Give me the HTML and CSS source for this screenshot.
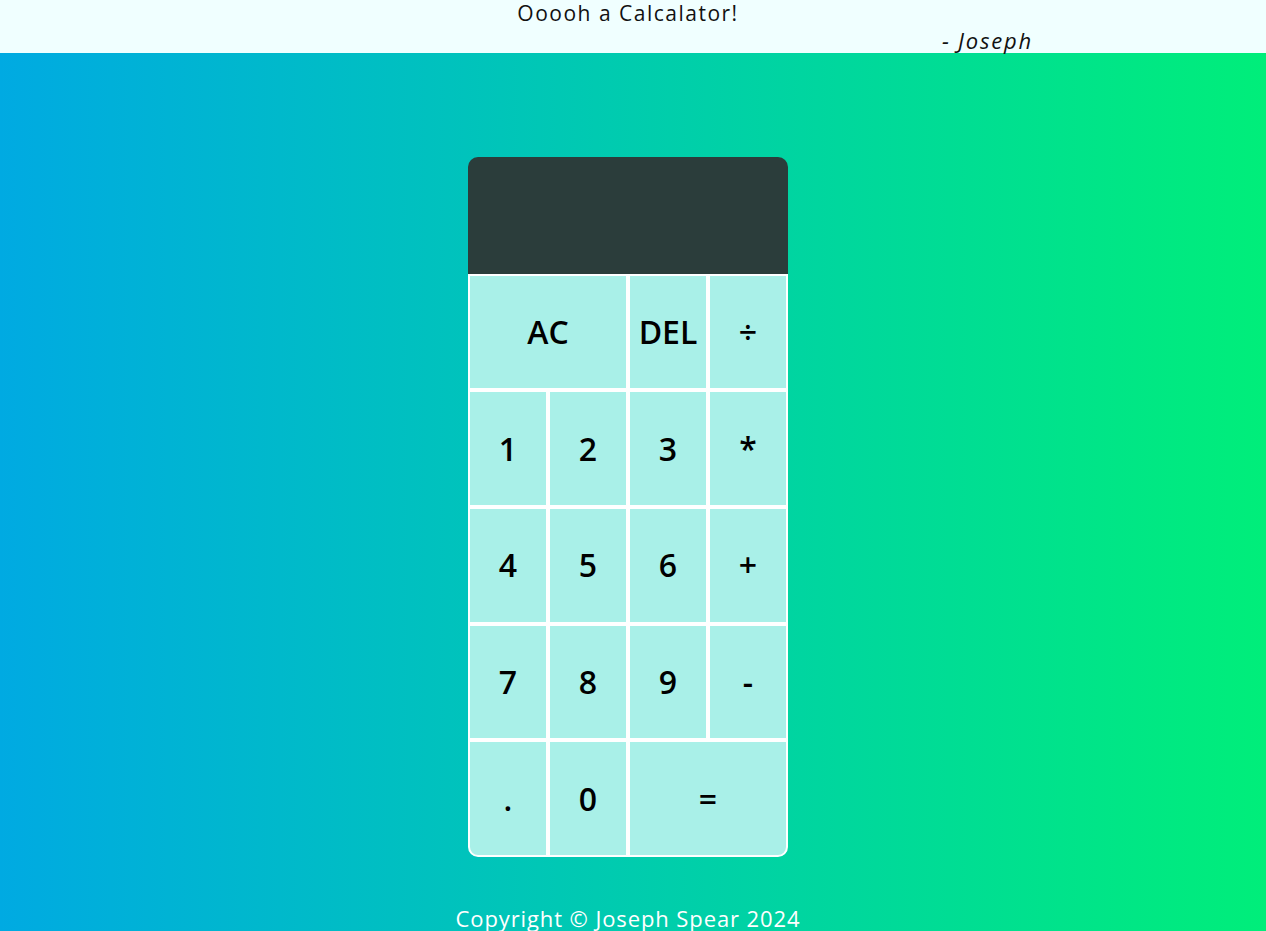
FILE: index.html
```html
<!DOCTYPE html>
<html lang="en">
<head>
<meta charset="utf-8">
<title>Calculator</title>
<link rel="stylesheet" href="styles.css">
</head>
<body>
<header class="top">
  <div class="quote">
    <p class="quote-text">Ooooh a Calcalator!</p>
    <p class="quote-author">- Joseph</p>
  </div>
</header>
<main class="page">
  <div class="calc">
    <div class="output"></div>
    <button class="key span-two">AC</button>
    <button class="key">DEL</button>
    <button class="key">÷</button>
    <button class="key">1</button>
    <button class="key">2</button>
    <button class="key">3</button>
    <button class="key">*</button>
    <button class="key">4</button>
    <button class="key">5</button>
    <button class="key">6</button>
    <button class="key">+</button>
    <button class="key">7</button>
    <button class="key">8</button>
    <button class="key">9</button>
    <button class="key">-</button>
    <button class="key corner-left">.</button>
    <button class="key">0</button>
    <button class="key span-two corner-right">=</button>
  </div>
  <footer class="foot">Copyright © Joseph Spear 2024</footer>
</main>
</body>
</html>
```
FILE: styles.css
```css
* { box-sizing: border-box; }
html, body {
  margin: 0;
  padding: 0;
}
body {
  font-family: "Open Sans", "DejaVu Sans", sans-serif;
  background: linear-gradient(to right, #00aae2, #00ee7a);
  min-height: 960px;
}
.top {
  background: #f0ffff;
  height: 53px;
  padding-right: 10px;
}
.quote {
  width: 810px;
  margin: 0 auto;
  font-size: 21px;
  color: #111;
}
.quote-text {
  margin: 0;
  text-align: center;
  line-height: 27px;
  letter-spacing: 1.5px;
}
.quote-author {
  margin: 0;
  text-align: right;
  font-style: italic;
  font-size: 22px;
  line-height: 26px;
  letter-spacing: 1.8px;
}
.page {
  display: flex;
  flex-direction: column;
  align-items: center;
  padding-top: 104px;
  padding-right: 10px;
}
.calc {
  display: grid;
  grid-template-columns: repeat(4, 80px);
  grid-template-rows: repeat(6, 1fr);
  height: 700px;
  border-radius: 10px;
}
.output {
  grid-column: 1 / -1;
  background: #2b3d3b;
  border-radius: 10px 10px 0 0;
}
.key {
  font-family: inherit;
  font-size: 32px;
  font-weight: 600;
  color: #000;
  background: #a9f0e8;
  border: 2px solid #fff;
  padding: 0 0 1px 0;
  margin: 0;
  cursor: pointer;
}
.span-two { grid-column: span 2; }
.corner-left { border-bottom-left-radius: 10px; }
.corner-right { border-bottom-right-radius: 10px; }
.foot {
  margin-top: 46px;
  color: #fff;
  font-size: 22px;
  line-height: 30px;
  letter-spacing: 0.9px;
}
```
